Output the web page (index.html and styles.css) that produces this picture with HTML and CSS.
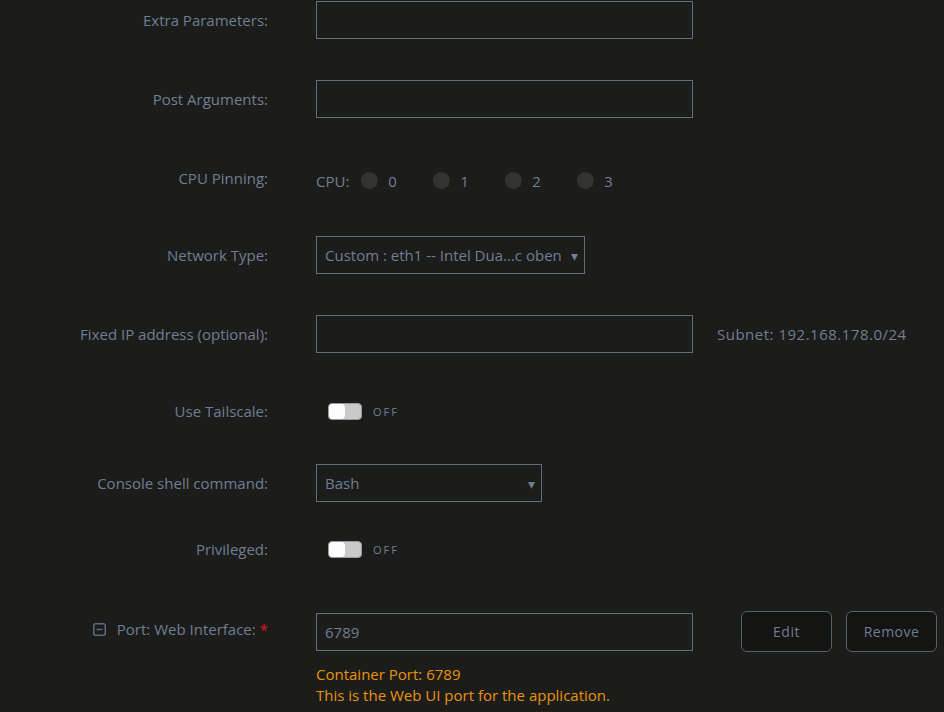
FILE: index.html
```html
<!DOCTYPE html>
<html lang="en">

    <head>
        <meta charset="UTF-8">
        <meta name="viewport" content="width=device-width, initial-scale=1.0">
        <title>Container Settings</title>
        <link rel="stylesheet" href="styles.css">
    </head>

    <body>
        <form class="settings">
            <div class="row row-extra">
                <label class="label" for="extra">Extra Parameters:</label>
                <div class="field"><input class="text" type="text" id="extra"></div>
            </div>

            <div class="row row-post">
                <label class="label" for="post">Post Arguments:</label>
                <div class="field"><input class="text" type="text" id="post"></div>
            </div>

            <div class="row row-cpu">
                <span class="label">CPU Pinning:</span>
                <div class="field cpu">
                    <span class="cpu-title">CPU:</span>
                    <span class="cpu-item"><span class="dot"></span>0</span>
                    <span class="cpu-item"><span class="dot"></span>1</span>
                    <span class="cpu-item"><span class="dot"></span>2</span>
                    <span class="cpu-item"><span class="dot"></span>3</span>
                </div>
            </div>

            <div class="row row-net">
                <span class="label">Network Type:</span>
                <div class="field">
                    <span class="select select-net">Custom : eth1 -- Intel Dua...c oben</span>
                </div>
            </div>

            <div class="row row-ip">
                <label class="label" for="ip">Fixed IP address (optional):</label>
                <div class="field">
                    <input class="text" type="text" id="ip">
                    <span class="hint">Subnet: 192.168.178.0/24</span>
                </div>
            </div>

            <div class="row row-toggle">
                <span class="label">Use Tailscale:</span>
                <div class="field">
                    <span class="switch"><span class="knob"></span></span>
                    <span class="switch-text">OFF</span>
                </div>
            </div>

            <div class="row row-shell">
                <span class="label">Console shell command:</span>
                <div class="field">
                    <span class="select select-shell">Bash</span>
                </div>
            </div>

            <div class="row row-priv">
                <span class="label">Privileged:</span>
                <div class="field">
                    <span class="switch"><span class="knob"></span></span>
                    <span class="switch-text">OFF</span>
                </div>
            </div>

            <div class="row row-port">
                <span class="label">
                    <svg class="collapse" width="13" height="13" viewBox="0 0 13 13">
                        <rect x="0.75" y="0.75" width="11.5" height="11.5" rx="2" fill="none" stroke="#5d6b7d" stroke-width="1.5"/>
                        <line x1="3.5" y1="6.5" x2="9.5" y2="6.5" stroke="#5d6b7d" stroke-width="1.5"/>
                    </svg>
                    Port: Web Interface: <span class="req">*</span>
                </span>
                <div class="port">
                    <div class="field">
                        <input class="text" type="text" value="6789">
                        <div class="actions">
                            <button type="button" class="btn">Edit</button>
                            <button type="button" class="btn">Remove</button>
                        </div>
                    </div>
                    <div class="note">
                        <div>Container Port: 6789</div>
                        <div>This is the Web UI port for the application.</div>
                    </div>
                </div>
            </div>
        </form>
    </body>

</html>
```

FILE: styles.css
```css
body {
    font-family: "Open Sans", "Noto Sans", sans-serif;
    font-size: 15px;
    background-color: #1c1d1b;
    color: #6f7e92;
    margin: 0;
    overflow: hidden;
}

.settings {
    margin-top: -20px;
    display: flex;
    flex-direction: column;
}

.row {
    display: flex;
    align-items: center;
    height: 78px;
}

.row-extra {
    height: 80px;
}

.row-cpu {
    height: 80px;
}

.row-net {
    height: 74px;
}

.row-ip {
    height: 84px;
}

.row-toggle {
    height: 70px;
}

.row-shell {
    height: 73px;
}

.row-priv {
    height: 60px;
}

.row-port {
    height: auto;
    align-items: flex-start;
    padding-top: 32px;
}

.label {
    width: 268px;
    text-align: right;
    margin-right: 48px;
    flex-shrink: 0;
    color: #6f7e92;
}

.field {
    display: flex;
    align-items: center;
}

.text {
    width: 377px;
    height: 38px;
    box-sizing: border-box;
    background: #1c1d1b;
    border: 1px solid #606d7d;
    color: #6f7e92;
    font-family: inherit;
    font-size: 15px;
    padding: 0 8px;
    margin: 0;
}

.hint {
    margin-left: 24px;
    letter-spacing: 0.5px;
}

/* cpu pinning */
.cpu {
    padding-top: 5px;
}

.cpu-title {
    margin-right: 12px;
}

.cpu-item {
    display: flex;
    align-items: center;
    width: 72px;
}

.dot {
    width: 17px;
    height: 17px;
    border-radius: 50%;
    background: #333431;
    margin-right: 10px;
}

/* fake selects */
.select {
    position: relative;
    box-sizing: border-box;
    height: 38px;
    border: 1px solid #606d7d;
    display: flex;
    align-items: center;
    padding-left: 8px;
    font-size: 15px;
    white-space: nowrap;
}

.select::after {
    content: "\25BE";
    position: absolute;
    right: 6px;
    top: 9px;
    font-size: 14px;
}

.select-net {
    width: 269px;
}

.select-shell {
    width: 226px;
}

/* toggle switch */
.switch {
    display: inline-flex;
    width: 32px;
    height: 15px;
    margin-left: 12px;
    border-radius: 4px;
    background: #c9c9c9;
    border: 1px solid #9a9a9a;
}

.knob {
    width: 16px;
    height: 15px;
    border-radius: 4px;
    background: #fdfdfd;
}

.switch-text {
    margin-left: 11px;
    font-size: 11px;
    letter-spacing: 2px;
}

/* port */
.row-port .label {
    display: flex;
    align-items: center;
    justify-content: flex-end;
    padding-top: 8px;
}

.collapse {
    margin-right: 11px;
}

.req {
    color: #e2141d;
    margin-left: 4px;
    align-self: flex-start;
}

.actions {
    display: flex;
    gap: 14px;
    margin-left: 48px;
}

.btn {
    width: 91px;
    height: 41px;
    background: #141412;
    border: 1px solid #56616e;
    border-radius: 6px;
    color: #6f7e92;
    font-family: inherit;
    font-size: 14px;
    letter-spacing: 0.5px;
}

.note {
    margin-top: 12px;
    color: #e8930c;
    font-size: 15px;
    line-height: 21px;
}
```
